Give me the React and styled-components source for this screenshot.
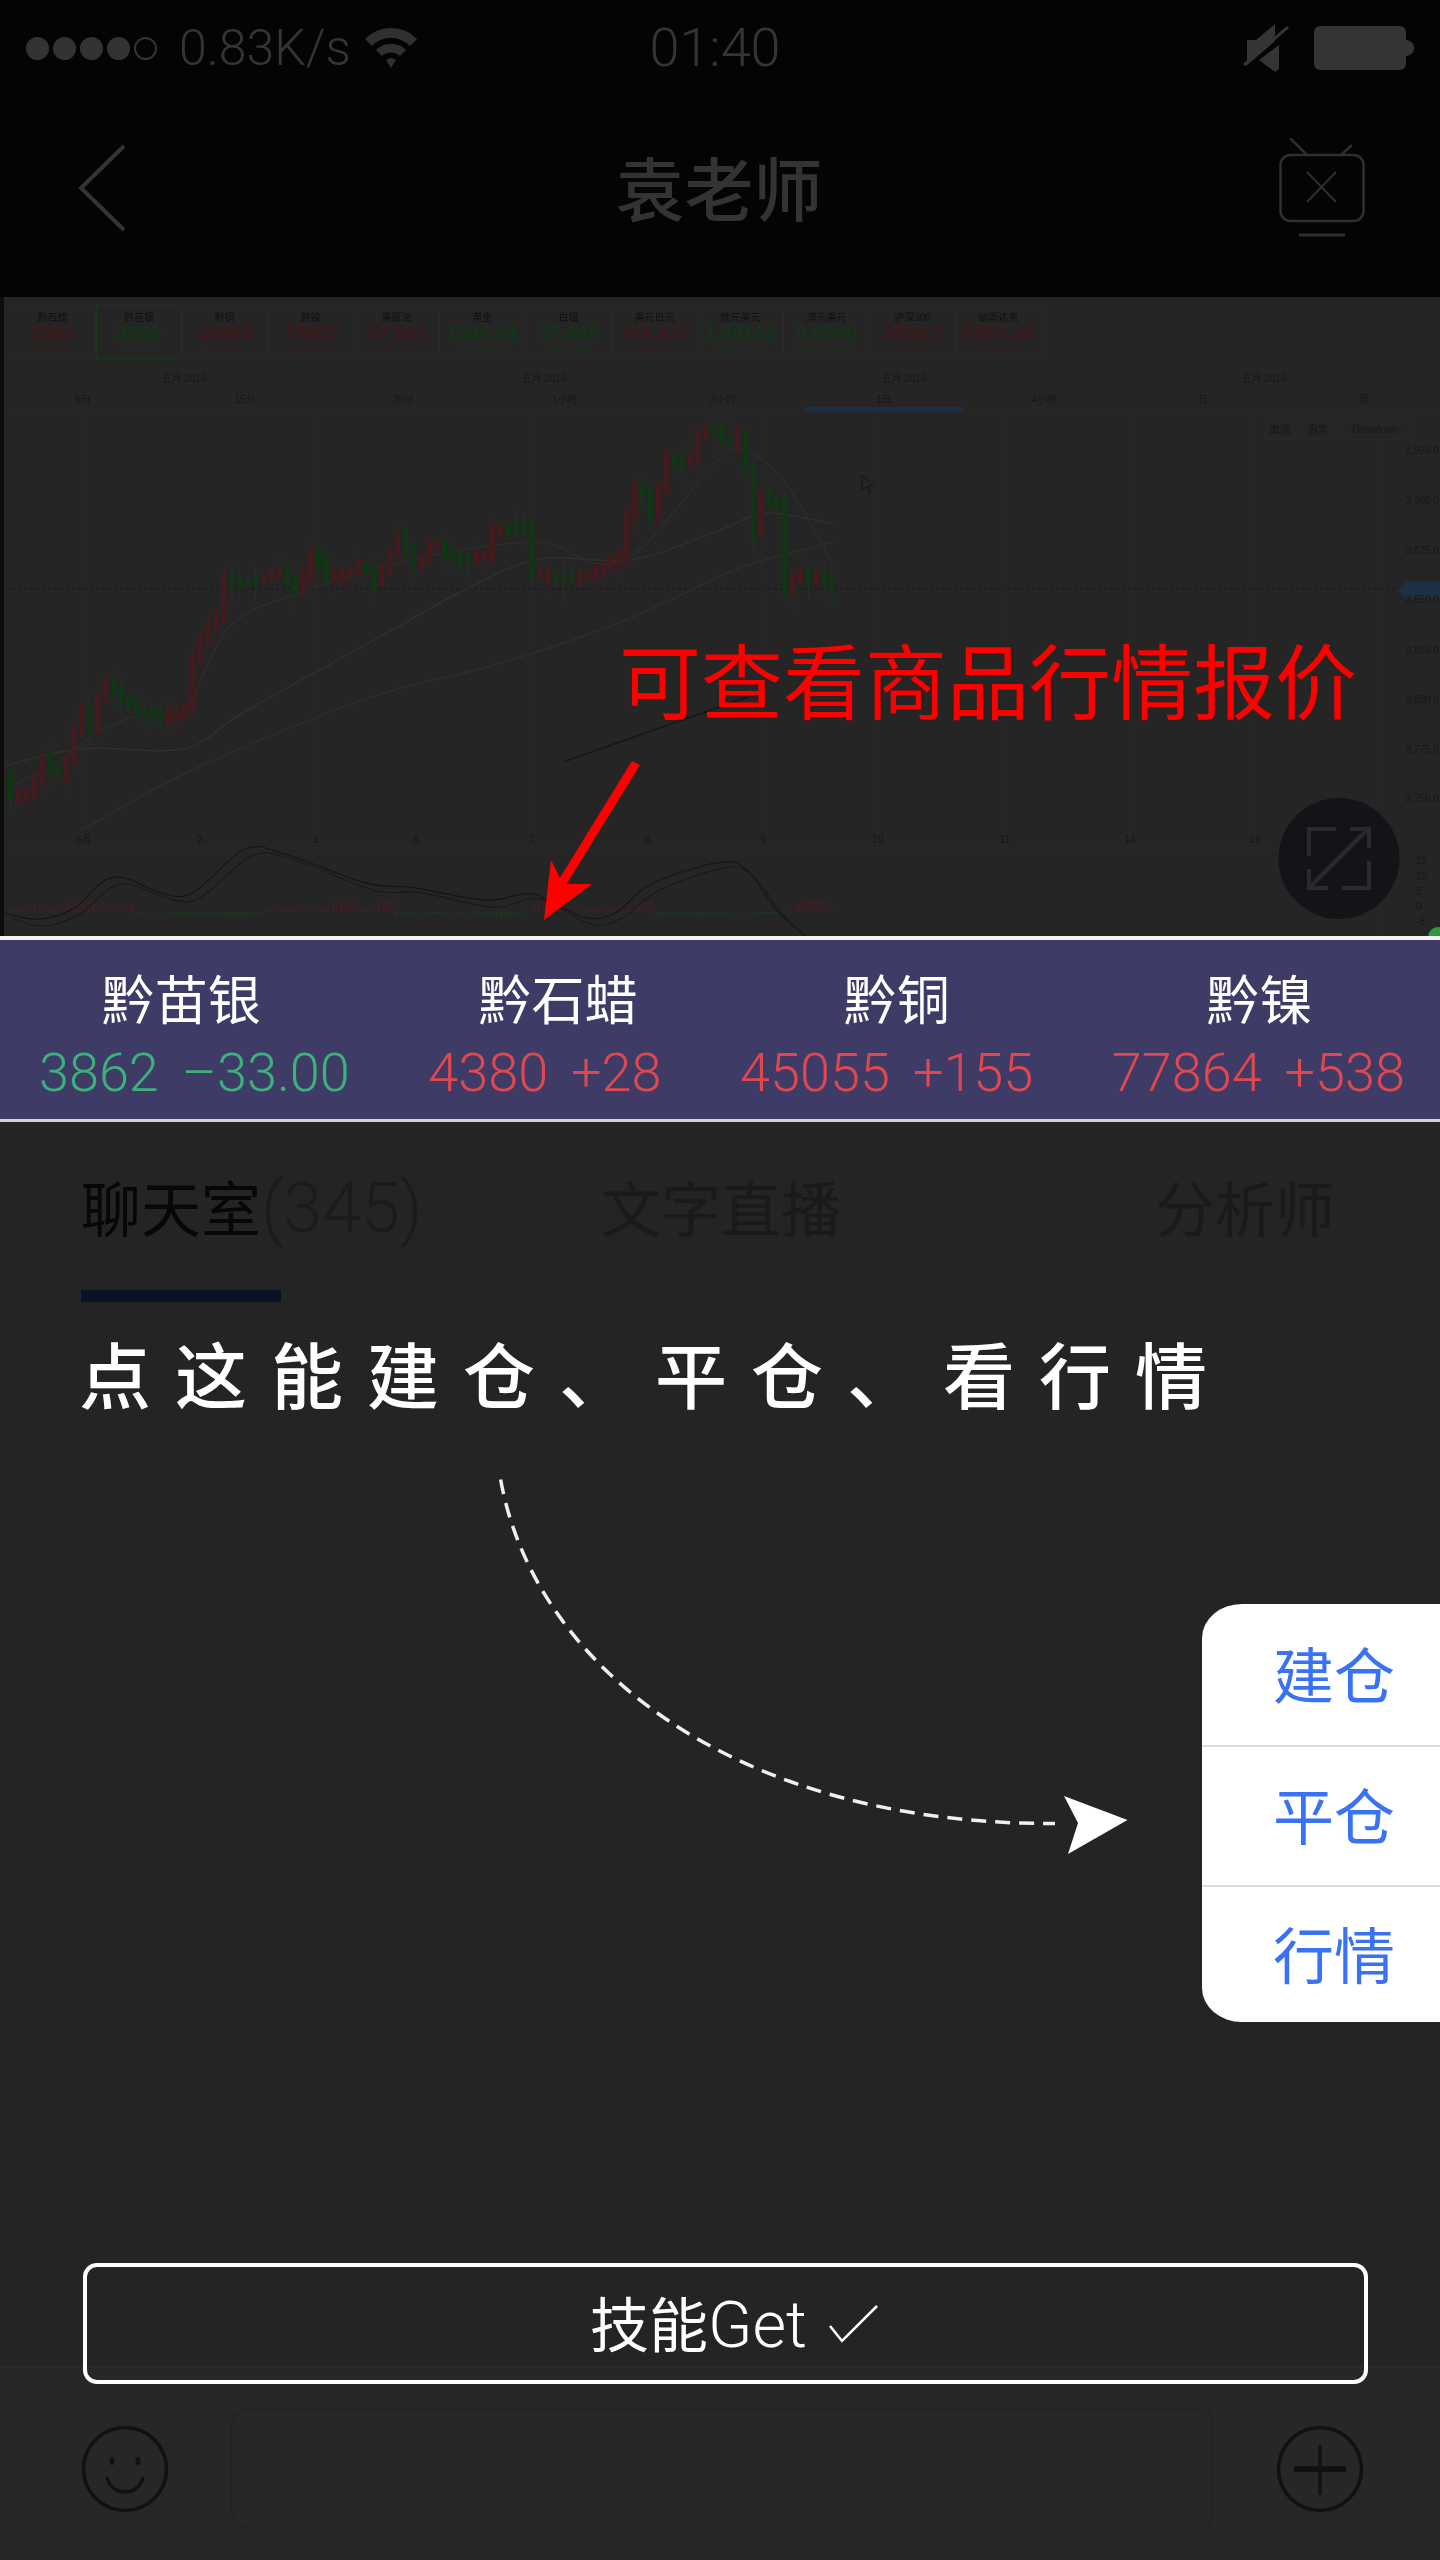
import React from "react";
import styled, { createGlobalStyle } from "styled-components";

const SANS = `Roboto, "Liberation Sans", "Noto Sans CJK SC", sans-serif`;
const CJK = `"Noto Sans CJK SC", "Liberation Sans", sans-serif`;

const Global = createGlobalStyle`
  html, body { margin: 0; padding: 0; background: #242424; }
  * { box-sizing: border-box; }
`;

const Page = styled.div`
  position: relative;
  width: 1440px;
  height: 2560px;
  overflow: hidden;
  display: flex;
  flex-direction: column;
  background: #242424;
  font-family: ${CJK};
`;

/* ---------- top bar ---------- */
const TopBar = styled.header`
  height: 297px;
  background: #040406;
  color: #333;
  flex: none;
`;
const StatusBar = styled.div`
  height: 96px;
  display: grid;
  grid-template-columns: 1fr auto 1fr;
  align-items: center;
  padding: 0 26px;
`;
const StatusLeft = styled.div`
  display: flex;
  align-items: center;
`;
const StatusRight = styled.div`
  display: flex;
  align-items: center;
  justify-content: flex-end;
  gap: 25px;
`;
const Signal = styled.div`
  display: flex;
  gap: 4px;
  margin-right: 22px;
`;
const Dot = styled.span`
  width: 23px;
  height: 23px;
  border-radius: 50%;
  background: ${(p) => (p.$off ? "transparent" : "#333")};
  border: 2px solid #333;
`;
const StatusText = styled.span`
  font-family: ${SANS};
  font-weight: 300;
  font-size: 50px;
  line-height: 60px;
  color: #343434;
`;
const Speed = styled(StatusText)`
  margin-right: 12px;
`;
const Clock = styled(StatusText)`
  font-size: 54px;
  margin-right: 10px;
`;
const NavBar = styled.nav`
  height: 184px;
  display: grid;
  grid-template-columns: 1fr auto 1fr;
  align-items: center;
  padding: 0 75px 0 78px;
`;
const NavTitle = styled.h1`
  margin: 0 5px 5px 0;
  font-size: 69px;
  line-height: 80px;
  font-weight: 500;
  color: #333;
`;
const NavRight = styled.div`
  display: flex;
  justify-content: flex-end;
`;

/* ---------- chart ---------- */
const ChartPanel = styled.section`
  height: 639px;
  flex: none;
  display: flex;
  flex-direction: column;
  border-left: 4px solid #0c0c0c;
  background: #252525;
  overflow: hidden;
`;
const QuoteRow = styled.div`
  height: 70px;
  flex: none;
  display: flex;
  padding: 8px 0 0 6px;
  filter: blur(0.4px);
`;
const QuoteCard = styled.div`
  width: 86px;
  height: 54px;
  display: flex;
  flex-direction: column;
  align-items: center;
  justify-content: center;
  border: 1px solid ${(p) => (p.$active ? "#153a1c" : "#292929")};
  border-left-width: ${(p) => (p.$active ? 1 : 0)}px;
`;
const QuoteName = styled.span`
  font-size: 10px;
  line-height: 13px;
  color: #111;
`;
const QuotePrice = styled.span`
  font-family: "Liberation Sans", sans-serif;
  font-weight: 700;
  font-size: 20px;
  line-height: 21px;
  white-space: nowrap;
  color: ${(p) => (p.$up ? "#3f1a1c" : "#123616")};
`;
const QuoteSub = styled.span`
  font-family: "Liberation Sans", sans-serif;
  font-size: 8px;
  line-height: 10px;
  white-space: nowrap;
  color: ${(p) => (p.$up ? "#362022" : "#1b3520")};
`;
const ChartSvg = styled.svg`
  display: block;
  width: 1440px;
  height: 570px;
  margin-left: -4px;
  flex: none;
  filter: blur(0.6px);
`;
const AxisText = styled.text`
  font-family: "Liberation Sans", "Noto Sans CJK SC", sans-serif;
  font-size: 10px;
  fill: #171717;
`;

/* ---------- quote strip ---------- */
const Strip = styled.section`
  flex: none;
  height: 186px;
  background: #3e3c67;
  border-top: 4px solid #f4f4f4;
  border-bottom: 3px solid #d2d2d6;
  display: flex;
  justify-content: space-between;
  padding: 26px 35px 0 39px;
`;
const StripItem = styled.div`
  display: flex;
  flex-direction: column;
  align-items: center;
  gap: 14px;
`;
const StripName = styled.div`
  font-size: 53px;
  line-height: 62px;
  color: #fff;
  margin-left: ${(p) => p.$shift || 0}px;
`;
const StripPrice = styled.div`
  display: flex;
  gap: 23px;
  font-family: ${SANS};
  font-weight: 300;
  font-size: 54px;
  line-height: 62px;
  white-space: nowrap;
  color: ${(p) => (p.$up ? "#e0484f" : "#3bb27c")};
`;

/* ---------- tabs ---------- */
const Tabs = styled.div`
  flex: none;
  display: grid;
  grid-template-columns: 520px 554px auto;
  padding: 48px 0 0 81px;
`;
const Tab = styled.div`
  display: flex;
  flex-direction: column;
  align-items: flex-start;
`;
const TabLabel = styled.div`
  font-size: 60px;
  line-height: 72px;
  white-space: nowrap;
  color: ${(p) => (p.$active ? "#070707" : "#1a1a1a")};
`;
const TabCount = styled.span`
  font-family: ${SANS};
  font-weight: 300;
  font-size: 70px;
  color: #1b1b1b;
`;
const TabMark = styled.div`
  width: 200px;
  height: 12px;
  margin-top: 46px;
  background: #0a1228;
`;
const Spacer = styled.div`
  flex: 1;
`;

/* ---------- composer ---------- */
const Composer = styled.footer`
  flex: none;
  height: 194px;
  background: #272727;
  border-top: 1px solid #2c2c2c;
  display: flex;
  align-items: center;
  justify-content: space-between;
  padding: 10px 76px 0 81px;
`;
const ComposerInput = styled.div`
  width: 983px;
  height: 121px;
  border: 2px solid #232323;
  border-radius: 16px;
  background: #262626;
`;

/* ---------- guide overlay ---------- */
const Guide = styled.div`
  position: absolute;
  inset: 0;
  pointer-events: none;
`;
const RedCaption = styled.div`
  position: absolute;
  left: 619px;
  top: 628px;
  font-size: 82px;
  line-height: 100px;
  color: #fe0000;
  white-space: nowrap;
`;
const Overlaid = styled.svg`
  position: absolute;
  left: ${(p) => p.$x}px;
  top: ${(p) => p.$y}px;
`;
const HandNote = styled.div`
  position: absolute;
  left: 79px;
  top: 1335px;
  font-size: 72px;
  line-height: 74px;
  font-weight: 500;
  letter-spacing: 24px;
  color: #fff;
  white-space: nowrap;
`;
const TradeMenu = styled.div`
  position: absolute;
  left: 1202px;
  top: 1604px;
  width: 238px;
  height: 418px;
  background: #fff;
  border-radius: 40px 0 0 40px / 34px 0 0 34px;
  display: grid;
  grid-template-rows: 141px 140px 137px;
`;
const TradeItem = styled.div`
  display: flex;
  align-items: center;
  padding: 0 0 5px 71px;
  font-size: 61px;
  color: #3a72f5;
  border-top: ${(p) => (p.$first ? "none" : "2px solid #dcdcdc")};
`;
const GotIt = styled.div`
  position: absolute;
  left: 83px;
  top: 2263px;
  width: 1285px;
  height: 121px;
  border: 4px solid #fff;
  border-radius: 14px;
  display: flex;
  align-items: center;
  justify-content: center;
  gap: 22px;
  padding-left: 18px;
  font-size: 59px;
  color: #fff;
`;
const GotText = styled.span`
  line-height: 70px;
`;
const GotLatin = styled.span`
  font-family: ${SANS};
  font-weight: 300;
  font-size: 65px;
`;

/* ---------- chart data ---------- */
const z2 = ([x, y]) => [x / 2.178, 290 + y / 2.376];
const z3 = ([x, y]) => [720 + x / 2.178, 290 + y / 2.376];
const pts = (left, right = []) => [...left.map(z2), ...right.map(z3)];

const smooth = (p) => {
  let d = `M${p[0][0].toFixed(1)} ${p[0][1].toFixed(1)}`;
  for (let i = 0; i < p.length - 1; i++) {
    const a = p[Math.max(i - 1, 0)];
    const b = p[i];
    const c = p[i + 1];
    const e = p[Math.min(i + 2, p.length - 1)];
    const c1 = [b[0] + (c[0] - a[0]) / 6, b[1] + (c[1] - a[1]) / 6];
    const c2 = [c[0] - (e[0] - b[0]) / 6, c[1] - (e[1] - b[1]) / 6];
    d += ` C${c1[0].toFixed(1)} ${c1[1].toFixed(1)} ${c2[0].toFixed(1)} ${c2[1].toFixed(1)} ${c[0].toFixed(1)} ${c[1].toFixed(1)}`;
  }
  return d;
};

const trace = pts(
  [[15,1150],[40,1210],[80,1190],[105,1110],[145,1160],[165,1080],[185,985],[210,1050],[232,920],[270,970],[320,1005],[380,1015],[425,990],[430,870],[460,800],[490,770],[495,680],[520,700],[560,690],[620,670],[660,715],[690,620],[730,690],[800,650],[825,700],[880,580],[915,660],[950,600],[1000,640],[1070,630],[1080,575],[1165,560],[1170,670],[1240,690],[1310,670],[1375,620],[1375,540],[1400,450],[1430,540],[1460,400],[1510,420],[1525,345],[1560,330]],
  [[0,340],[30,370],[55,330],[70,460],[85,590],[95,480],[140,515],[150,715],[180,665],[195,690],[235,680],[245,710]]
);

function valueAt(x) {
  for (let i = 1; i < trace.length; i++) {
    if (x <= trace[i][0]) {
      const [ax, ay] = trace[i - 1];
      const [bx, by] = trace[i];
      const t = bx === ax ? 0 : (x - ax) / (bx - ax);
      return ay + (by - ay) * t;
    }
  }
  return trace[trace.length - 1][1];
}

const candles = [];
for (let x = 8; x < 832; x += 7.9) {
  const a = valueAt(x);
  const b = valueAt(x + 7.9);
  const noise = Math.abs(Math.sin(x * 12.9898)) * 12;
  const wig = Math.abs(Math.sin(x * 4.1414)) * 16;
  const pad = 2 + Math.abs(Math.sin(x * 7.77)) * 5;
  candles.push({
    x,
    top: Math.min(a, b) - pad,
    bottom: Math.max(a, b) + pad,
    hi: Math.min(a, b) - pad - noise,
    lo: Math.max(a, b) + pad + wig,
    up: Math.sin(x * 3.3) + (a - b) * 0.25 > 0,
  });
}

const maLong = pts([[175,1285],[420,1140],[800,970],[1080,890],[1350,790],[1568,680]], [[100,640],[245,600]]);
const maMid = pts([[10,1130],[180,1090],[400,1090],[520,1010],[700,900],[850,810],[1000,720],[1170,640],[1380,640],[1568,570]], [[100,530],[245,555]]);
const maFast = pts([[20,1180],[120,1130],[200,1060],[300,1010],[400,1000],[500,800],[650,720],[900,640],[1170,600],[1300,650],[1400,610],[1568,400]], [[70,390],[150,470],[245,650]]);
const trend = pts([[1230,1120],[1568,990]], [[90,955]]);
const macdA = pts([[10,1480],[80,1495],[160,1470],[250,1395],[400,1440],[530,1330],[620,1340],[800,1410],[900,1420],[1060,1450],[1160,1435],[1270,1490],[1340,1480],[1420,1410],[1568,1360]], [[60,1380],[120,1470],[180,1530]]);
const macdB = macdA.map(([x, y], i) => [x + 7, y + (i % 2 ? 7 : 5)]);

const hist = [];
for (let x = 8; x < 835; x += 4.2) {
  const h = 2 + Math.abs(Math.sin(x * 0.021)) * 11 * Math.abs(Math.sin(x * 0.06));
  hist.push({ x, h, up: Math.sin(x * 0.024) > 0 });
}

const quotes = [
  ["黔石蜡", "4382", "31 0.71%", true],
  ["黔苗银", "3855", "-41 -1.05%", false, true],
  ["黔铜", "45095", "195 0.43%", true],
  ["黔镍", "77965", "639 0.83%", true],
  ["美原油", "47.911", "0.32 0.67%", true],
  ["黄金", "1336.61", "-3.25 -0.24%", false],
  ["白银", "17.848", "-0.02 -0.11%", false],
  ["美元日元", "108.416", "0.056 0.05%", true],
  ["欧元美元", "1.20132", "-0.0024 -0.19%", false],
  ["澳元美元", "0.8046", "-0.0015 -0.18%", false],
  ["沪深300", "3836.7", "12 0.31%", true],
  ["纳斯达克", "5957.28", "35.8 0.60%", true],
];

const strip = [
  { name: "黔苗银", price: "3862", diff: "–33.00", up: false, shift: -26 },
  { name: "黔石蜡", price: "4380", diff: "+28", up: true, shift: 26 },
  { name: "黔铜", price: "45055", diff: "+155", up: true, shift: 20 },
  { name: "黔镍", price: "77864", diff: "+538", up: true, shift: 2 },
];

const grid = [84, 316, 532, 763, 878, 1005, 1130, 1255];
const axis = ["3,925.0", "3,900.0", "3,875.0", "3,850.0", "3,825.0", "3,800.0", "3,775.0", "3,750.0"];
const axisY = [450, 500, 550, 599, 650, 699, 749, 798];
const slots = [[83, "5分"], [245, "15分"], [403, "30分"], [565, "1小时"], [723, "2小时"], [884, "1日"], [1044, "4小时"], [1203, "日"], [1364, "周"]];
const days = [[84, "5月"], [200, "2"], [316, "3"], [416, "5"], [532, "7"], [647, "8"], [763, "9"], [878, "10"], [1005, "11"], [1130, "14"], [1255, "15"]];

function Chart() {
  return (
    <ChartSvg viewBox="0 367 1440 570">
      {[[184, "五月 2015"], [544, "五月 2015"], [904, "五月 2015"], [1264, "五月 2015"]].map(([x, t]) => (
        <AxisText key={x} x={x} y={382} textAnchor="middle">{t}</AxisText>
      ))}
      {slots.map(([x, t]) => (
        <AxisText key={x} x={x} y={403} textAnchor="middle">{t}</AxisText>
      ))}
      <rect x="805" y="407" width="158" height="4" fill="#1c2f45" />
      <line x1="0" x2="1440" y1="412" y2="412" stroke="#292929" />

      {grid.map((x) => (
        <line key={x} x1={x} x2={x} y1="412" y2="848" stroke="#292929" />
      ))}
      {axisY.map((y) => (
        <line key={y} x1="0" x2="1382" y1={y} y2={y} stroke="#272727" />
      ))}
      <line x1="0" x2="1382" y1="848" y2="848" stroke="#2b2b2b" />
      <line x1="1382" x2="1382" y1="412" y2="937" stroke="#292929" />
      <line x1="0" x2="1405" y1="589" y2="589" stroke="#171717" strokeDasharray="3 3" />

      {[[1266, 28, "激活"], [1303, 30, "自定"], [1338, 75, "Drawdown"]].map(([x, w, t]) => (
        <g key={x}>
          <rect x={x} y="418" width={w} height="21" fill="none" stroke="#2b2b2b" />
          <AxisText x={x + w / 2} y="433" textAnchor="middle">{t}</AxisText>
        </g>
      ))}
      <path d="M862 475 l0 15 l4 -3 l3 6 l2 -1 l-3 -6 l5 0 Z" fill="none" stroke="#141414" />

      <path d={smooth(maLong)} fill="none" stroke="#342c1f" strokeWidth="1.7" />
      <path d={smooth(maMid)} fill="none" stroke="#30302c" strokeWidth="1.4" />
      <path d={smooth(maFast)} fill="none" stroke="#302e2e" strokeWidth="1.2" />
      <path d={smooth(trend)} fill="none" stroke="#181512" strokeWidth="1.6" />

      {candles.map((c) => (
        <g key={c.x}>
          <line x1={c.x + 2.5} x2={c.x + 2.5} y1={c.hi} y2={c.lo} stroke={c.up ? "#352022" : "#1c3420"} />
          <rect x={c.x} y={c.top} width="5" height={c.bottom - c.top} fill={c.up ? "#441a1d" : "#103614"} />
        </g>
      ))}

      <path d="M1405 582 h35 v16 h-35 l-7 -8 Z" fill="#1c2f45" />
      {axisY.map((y, i) => (
        <AxisText key={y} x="1439" y={y + 4} textAnchor="end">{axis[i]}</AxisText>
      ))}
      {[[864, "15"], [880, "10"], [895, "5"], [910, "0"], [925, "-5"]].map(([y, t]) => (
        <AxisText key={y} x="1416" y={y}>{t}</AxisText>
      ))}

      {days.map(([x, t]) => (
        <AxisText key={x} x={x} y={843} textAnchor="middle">{t}</AxisText>
      ))}

      {hist.map((b) => (
        <rect key={b.x} x={b.x} y={b.up ? 912 - b.h : 912} width="3" height={b.h * (b.up ? 1 : 0.4)} fill={b.up ? "#362224" : "#1e3422"} />
      ))}
      <path d={smooth(macdA)} fill="none" stroke="#151515" strokeWidth="1.1" />
      <path d={smooth(macdB)} fill="none" stroke="#191919" strokeWidth="1.1" />
      <circle cx="1438" cy="937" r="10" fill="#2e9a3c" />
    </ChartSvg>
  );
}

export default function App() {
  return (
    <Page>
      <Global />
      <TopBar>
        <StatusBar>
          <StatusLeft>
            <Signal>
              <Dot /><Dot /><Dot /><Dot /><Dot $off />
            </Signal>
            <Speed>0.83K/s</Speed>
            <svg width="56" height="42" viewBox="0 0 56 42">
              <path d="M2 12 A36 36 0 0 1 54 12 L47 19 A26 26 0 0 0 9 19 Z" fill="#303030" />
              <path d="M13 23 A21 21 0 0 1 43 23 L37 29 A13 13 0 0 0 19 29 Z" fill="#303030" />
              <path d="M23 33 A8 8 0 0 1 33 33 L28 41 Z" fill="#303030" />
            </svg>
          </StatusLeft>
          <Clock>01:40</Clock>
          <StatusRight>
            <svg width="46" height="50" viewBox="0 0 46 50">
              <path d="M4 17 H13 L32 1 V22 L4 46 Z" fill="#343434" />
              <path d="M36 22 V46 L32 49 L16 37 Z" fill="#343434" />
              <path d="M1 47 L45 9" stroke="#040406" strokeWidth="3" />
              <path d="M1 42 L45 4" stroke="#343434" strokeWidth="3" />
            </svg>
            <svg width="100" height="44" viewBox="0 0 100 44">
              <rect x="0" y="0" width="92" height="44" rx="6" fill="#343434" />
              <path d="M92 14 C98 15 100 18 100 22 C100 26 98 29 92 30 Z" fill="#343434" />
            </svg>
          </StatusRight>
        </StatusBar>
        <NavBar>
          <svg width="48" height="88" viewBox="0 0 48 88">
            <path d="M46 2 L3 44 L46 86" fill="none" stroke="#343434" strokeWidth="4" />
          </svg>
          <NavTitle>袁老师</NavTitle>
          <NavRight>
            <svg width="86" height="100" viewBox="0 0 86 100" fill="none" stroke="#2f2f2f" strokeWidth="2.5">
              <path d="M11 0 L28 17 M73 7 L62 17" />
              <rect x="1.5" y="17" width="83" height="66" rx="10" />
              <path d="M28 34 L57 64 M57 34 L28 64" strokeWidth="2" />
              <path d="M20 97 H66" strokeWidth="3" />
            </svg>
          </NavRight>
        </NavBar>
      </TopBar>

      <ChartPanel>
        <QuoteRow>
          {quotes.map(([n, p, s, up, active]) => (
            <QuoteCard key={n} $active={active}>
              <QuoteName>{n}</QuoteName>
              <QuotePrice $up={up}>{p}</QuotePrice>
              <QuoteSub $up={up}>{s}</QuoteSub>
            </QuoteCard>
          ))}
        </QuoteRow>
        <Chart />
      </ChartPanel>

      <Strip>
        {strip.map((s) => (
          <StripItem key={s.name}>
            <StripName $shift={s.shift}>{s.name}</StripName>
            <StripPrice $up={s.up}>
              <span>{s.price}</span>
              <span>{s.diff}</span>
            </StripPrice>
          </StripItem>
        ))}
      </Strip>

      <Tabs>
        <Tab>
          <TabLabel $active>聊天室<TabCount>(345)</TabCount></TabLabel>
          <TabMark />
        </Tab>
        <Tab><TabLabel>文字直播</TabLabel></Tab>
        <Tab><TabLabel>分析师</TabLabel></Tab>
      </Tabs>
      <Spacer />

      <Composer>
        <svg width="88" height="88" viewBox="0 0 88 88" fill="none" stroke="#111" strokeWidth="3.5">
          <circle cx="44" cy="44" r="41.5" />
          <path d="M26 52 C30 72 58 72 62 52" />
          <ellipse cx="31" cy="36" rx="2.5" ry="4" fill="#111" stroke="none" />
          <ellipse cx="57" cy="36" rx="2.5" ry="4" fill="#111" stroke="none" />
        </svg>
        <ComposerInput />
        <svg width="88" height="88" viewBox="0 0 88 88" fill="none" stroke="#111" strokeWidth="3.5">
          <circle cx="44" cy="44" r="41.5" />
          <path d="M44 20 V70" strokeWidth="3" />
          <path d="M18 44 H70" strokeWidth="6" />
        </svg>
      </Composer>

      <Guide>
        <Overlaid $x={1278} $y={798} width="122" height="121" viewBox="0 0 122 121">
          <circle cx="61" cy="60.5" r="60.5" fill="#141418" />
          <g fill="none" stroke="#2a2a2e" strokeWidth="4">
            <path d="M31 58 V31 H58" />
            <path d="M91 63 V90 H64" />
            <path d="M33 88 L90 31" />
            <path d="M72 31 H91 V50" />
            <path d="M31 71 V90 H50" />
          </g>
        </Overlaid>
        <RedCaption>可查看商品行情报价</RedCaption>
        <Overlaid $x={530} $y={750} width="120" height="180" viewBox="530 750 120 180">
          <path d="M636 763 L562 883" stroke="#fe0000" strokeWidth="9" fill="none" />
          <path d="M544 920 L551 860 L563 884 L592 884 Z" fill="#fe0000" />
        </Overlaid>
        <HandNote>点这能建仓、平仓、看行情</HandNote>
        <Overlaid $x={480} $y={1470} width="660" height="400" viewBox="480 1470 660 400">
          <path d="M500.6 1479.5 C535 1670 740 1825 1055 1823.5" fill="none" stroke="#f0f0f0" strokeWidth="3.5" strokeDasharray="15 9" />
          <path d="M1064 1796 L1127.5 1820 L1068 1854 L1078 1823 Z" fill="#fff" />
        </Overlaid>
        <TradeMenu>
          <TradeItem $first>建仓</TradeItem>
          <TradeItem>平仓</TradeItem>
          <TradeItem>行情</TradeItem>
        </TradeMenu>
        <GotIt>
          <GotText>技能<GotLatin>Get</GotLatin></GotText>
          <svg width="50" height="38" viewBox="0 0 50 38" fill="none" stroke="#fff" strokeWidth="2.5">
            <path d="M1 21 L13 36 L48 1" />
          </svg>
        </GotIt>
      </Guide>
    </Page>
  );
}
